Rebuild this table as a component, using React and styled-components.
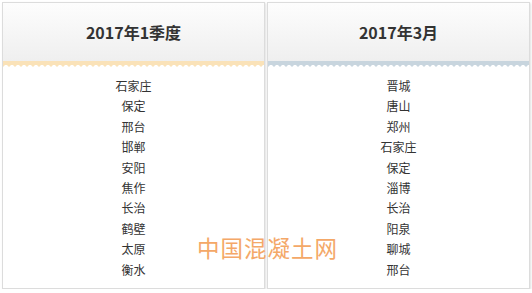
import styled, { createGlobalStyle } from "styled-components";

const GlobalStyle = createGlobalStyle`
  body {
    margin: 0;
    background: #fff;
    font-family: "Microsoft YaHei", "Noto Sans CJK SC", "Liberation Sans", sans-serif;
  }
`;

const columns = [
  {
    id: "q1",
    title: "2017年1季度",
    wave: "#fae2b8",
    cities: ["石家庄", "保定", "邢台", "邯郸", "安阳", "焦作", "长治", "鹤壁", "太原", "衡水"],
  },
  {
    id: "m3",
    title: "2017年3月",
    wave: "#c8d5de",
    cities: ["晋城", "唐山", "郑州", "石家庄", "保定", "淄博", "长治", "阳泉", "聊城", "邢台"],
  },
];

const App = () => {
  return (
    <>
      <GlobalStyle />
      <Wrapper>
        {columns.map((col) => (
          <Card key={col.id}>
            <Head>{col.title}</Head>
            <Wave $color={col.wave} />
            <List>
              {col.cities.map((c, i) => (
                <Item key={i}>{c}</Item>
              ))}
            </List>
          </Card>
        ))}
        <Mark>中国混凝土网</Mark>
      </Wrapper>
    </>
  );
};

const Wrapper = styled.div`
  position: relative;
  display: grid;
  grid-template-columns: 263px 263px;
  gap: 2px;
  padding: 2px 2px 0 2px;
  width: 528px;
`;

const Card = styled.div`
  height: 287px;
  box-sizing: border-box;
  border: 1px solid #dcdcdc;
  box-shadow: 1px 1px 2px rgba(0, 0, 0, 0.12);
  background: #fff;
  display: flex;
  flex-direction: column;
`;

const Head = styled.div`
  height: 58px;
  display: flex;
  align-items: center;
  justify-content: center;
  background: linear-gradient(#fdfdfd, #efefef);
  font-size: 16px;
  font-weight: bold;
  color: #333;
`;

const Wave = styled.div`
  height: 6px;
  background:
    radial-gradient(circle at 3px 7px, #fff 2.6px, transparent 3.2px) 0 0 / 6px 6px repeat-x,
    ${(p) => p.$color};
`;

const List = styled.ul`
  list-style: none;
  margin: 0;
  padding: 9px 0 0;
  text-align: center;
`;

const Item = styled.li`
  font-size: 12px;
  line-height: 20.4px;
  color: #333;
`;

const Mark = styled.div`
  position: absolute;
  left: 197px;
  top: 231px;
  font-size: 22.5px;
  letter-spacing: 1px;
  color: #f4a460;
  opacity: 0.95;
  pointer-events: none;
`;

export default App;
